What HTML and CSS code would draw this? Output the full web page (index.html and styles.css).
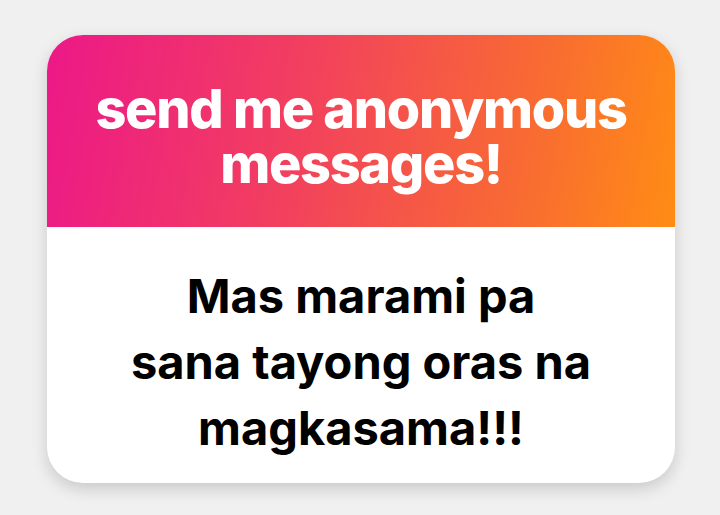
FILE: index.html
```html
<!DOCTYPE html>
<html lang="en">
<head>
<meta charset="utf-8">
<title>send me anonymous messages!</title>
<link rel="stylesheet" href="styles.css">
</head>
<body>
<div class="page">
  <div class="card">
    <div class="card-head">
      <h1 class="title">send me anonymous<br>messages!</h1>
    </div>
    <div class="card-body">
      <p class="message">Mas marami pa<br>sana tayong oras na<br>magkasama!!!</p>
    </div>
  </div>
</div>
</body>
</html>
```
FILE: styles.css
```css
html, body {
  margin: 0;
  padding: 0;
  background: #f0f0f0;
}
.page {
  width: 720px;
  height: 515px;
  padding: 35px 45px 0 47px;
  box-sizing: border-box;
}
.card {
  width: 628px;
  height: 448px;
  border-radius: 36px;
  overflow: hidden;
  background: #ffffff;
  box-shadow: 0 6px 16px rgba(0, 0, 0, 0.16);
  display: flex;
  flex-direction: column;
}
.card-head {
  height: 192px;
  flex: none;
  box-sizing: border-box;
  padding-top: 10px;
  background: linear-gradient(100deg, #ec1888 0%, #f2405e 40%, #f86a33 75%, #ff8c14 100%);
  display: flex;
  align-items: center;
  justify-content: center;
}
.title {
  margin: 0;
  color: #ffffff;
  font-family: Inter, "Liberation Sans", sans-serif;
  font-weight: 800;
  font-size: 54px;
  line-height: 55px;
  letter-spacing: -1.3px;
  text-align: center;
}
.card-body {
  flex: 1;
  box-sizing: border-box;
  padding-top: 14px;
  display: flex;
  align-items: center;
  justify-content: center;
}
.message {
  margin: 0;
  color: #000000;
  font-family: Inter, "Liberation Sans", sans-serif;
  font-weight: 700;
  font-size: 47px;
  line-height: 66px;
  text-align: center;
}
```
